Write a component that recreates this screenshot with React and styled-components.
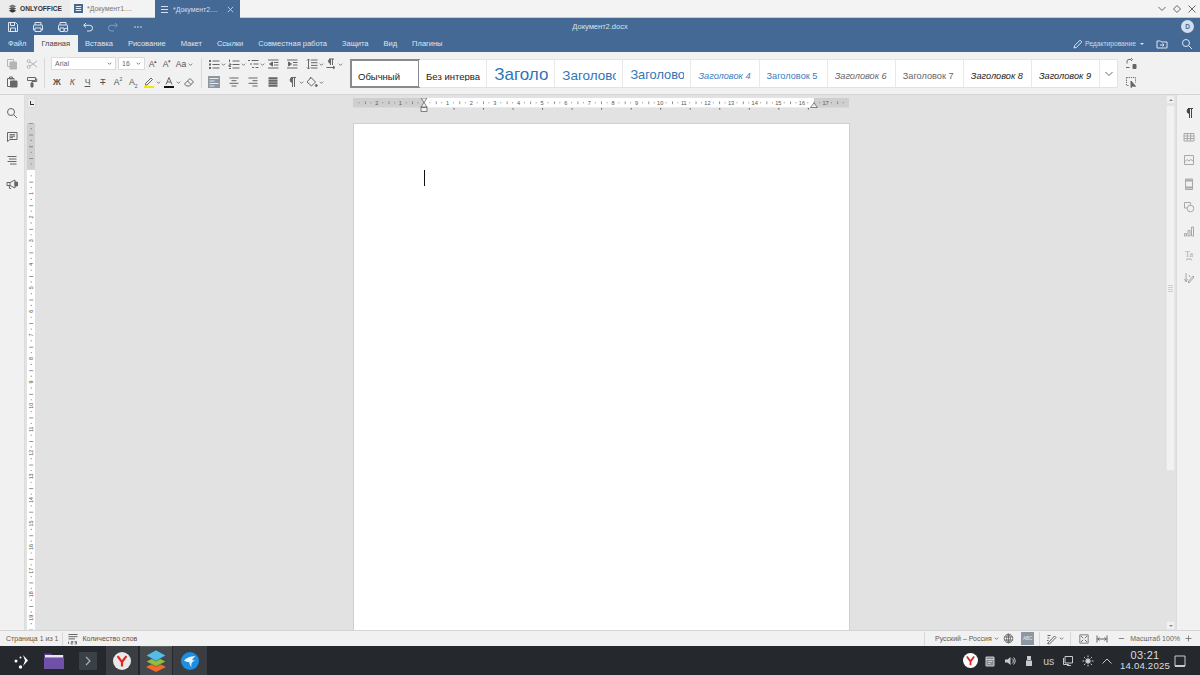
import React from 'react';
import styled, { createGlobalStyle } from 'styled-components';

const Global = createGlobalStyle`
  html, body { margin: 0; height: 100%; overflow: hidden; }
  #root { height: 100%; }
  * { box-sizing: border-box; }
  body { font-family: "Liberation Sans", Arial, sans-serif; }
`;

const Page = styled.div`display:flex;flex-direction:column;width:1200px;height:675px;overflow:hidden;background:#f1f1f1;`;

/* window tab strip */
const TabStrip = styled.div`display:flex;align-items:stretch;height:18px;flex:none;background:#f3f3f3;border-bottom:1px solid #c9c9c9;`;
const Brand = styled.div`display:flex;align-items:center;gap:3px;width:70px;padding-left:8px;background:#ececec;font-size:6.6px;font-weight:700;color:#333;`;
const WinTab = styled.div`
  display:flex;align-items:center;width:85px;padding-left:${p => p.$active ? 5 : 4}px;
  background:${p => p.$active ? '#446995' : '#f3f3f3'};
  color:${p => p.$active ? '#d5dfeb' : '#777'};font-size:6.9px;
  margin-bottom:${p => p.$active ? -1 : 0}px;
`;
const WinTabTitle = styled.span`margin-left:4px;flex:1;`;
const WinTabClose = styled.span`display:flex;margin-right:6px;`;
const WinControls = styled.div`margin-left:auto;display:flex;align-items:center;gap:5px;padding-right:3px;color:#666;`;

/* header */
const Header = styled.div`background:#446995;color:#dfe6ef;flex:none;`;
const TitleRow = styled.div`display:flex;align-items:center;height:17px;position:relative;`;
const QuickTool = styled.span`display:flex;justify-content:center;width:25px;opacity:${p => p.$dim ? .4 : 1};`;
const DocTitle = styled.div`position:absolute;left:0;right:0;top:0;height:17px;line-height:17px;text-align:center;font-size:7.5px;color:#dbe3ec;`;
const Avatar = styled.div`margin-left:auto;margin-right:6px;width:13px;height:13px;border-radius:50%;background:#d5dfeb;color:#446995;font-size:6.5px;font-weight:700;display:flex;align-items:center;justify-content:center;`;
const MenuRow = styled.div`display:flex;align-items:stretch;height:17px;`;
const MenuList = styled.div`display:flex;padding-left:.5px;`;
const MenuTab = styled.div`
  display:flex;align-items:center;padding:0 7.5px;font-size:7.5px;
  background:${p => p.$active ? '#f1f1f1' : 'transparent'};
  color:${p => p.$active ? '#444' : '#dfe6ef'};
`;
const HeaderRight = styled.div`margin-left:auto;display:flex;align-items:center;padding-right:7px;`;
const EditMode = styled.span`font-size:6.7px;color:#cfd9e5;margin-left:2px;margin-right:4px;`;
const Caret = styled.span`width:0;height:0;border-left:2px solid transparent;border-right:2px solid transparent;border-top:2.5px solid currentColor;`;
const CaretUp = styled(Caret)`border-top:none;border-bottom:2.5px solid currentColor;`;
const HeaderAction = styled.span`display:flex;margin-left:${p => p.$ml}px;`;

/* toolbar */
const Toolbar = styled.div`display:flex;height:43px;flex:none;padding-top:6px;background:#f1f1f1;border-bottom:1px solid #d5d5d5;color:#666;`;
const ToolCol = styled.div`display:flex;flex-direction:column;gap:6px;padding-left:${p => p.$pl || 0}px;width:${p => p.$w}px;flex:none;`;
const ToolRow = styled.div`display:flex;align-items:center;height:12px;`;
const Sep = styled.div`width:1px;height:30px;background:#d8d8d8;flex:none;`;
const Tool = styled.span`
  display:flex;align-items:center;width:${p => p.$w || 19.5}px;flex:none;height:12px;
  color:${p => p.$dim ? '#b5b5b5' : 'inherit'};
`;
const IconFace = styled.span`
  display:flex;align-items:center;justify-content:center;width:12px;height:12px;flex:none;
  background:${p => p.$on ? '#8b97a3' : 'transparent'};
  color:${p => p.$on ? '#e8e8e8' : 'inherit'};
`;
const Glyph = styled.span`font-size:8.6px;line-height:12px;font-weight:${p => p.$b ? 700 : 400};font-style:${p => p.$i ? 'italic' : 'normal'};text-decoration:${p => p.$d || 'none'};color:#555;`;
const Sup = styled.span`font-size:5px;vertical-align:${p => p.$sub ? 'sub' : 'super'};line-height:0;`;
const Combo = styled.div`
  display:flex;align-items:center;justify-content:space-between;width:${p => p.$w}px;height:13px;margin-right:${p => p.$mr || 0}px;
  padding:0 3px;background:#fff;border:1px solid #dcdcdc;font-size:7px;color:#666;flex:none;margin-top:-1px;
`;
const Gallery = styled.div`display:flex;width:768px;height:29px;margin-top:1px;margin-left:9px;background:#fff;border:1px solid #e2e2e2;border-radius:1px;flex:none;`;
const StyleItem = styled.div`
  width:68.1px;flex:none;height:100%;display:flex;align-items:flex-end;overflow:hidden;white-space:nowrap;
  background:#fff;border-right:${p => p.$sel ? 'none' : '1px solid #e9e9e9'};
  padding:0 6px ${p => p.$pb}px 7px;
  font-size:${p => p.$fs}px;line-height:1;color:${p => p.$c};font-style:${p => p.$it ? 'italic' : 'normal'};
  outline:${p => p.$sel ? '2px solid #8a8a8a' : 'none'};outline-offset:-1px;
`;
const StyleClip = styled.span`display:block;overflow:hidden;width:100%;`;
const GalleryMore = styled.div`flex:1;display:flex;align-items:center;justify-content:center;color:#666;`;
const EndTools = styled.div`display:flex;flex-direction:column;gap:6px;margin-left:7px;`;

/* workspace */
const Workspace = styled.div`flex:1;display:flex;min-height:0;background:#e2e2e2;`;
const SidePanel = styled.div`
  width:${p => p.$w}px;flex:none;display:flex;flex-direction:column;align-items:center;gap:11.6px;padding-top:12px;
  background:#f1f1f1;color:${p => p.$c || '#666'};
  ${p => p.$right ? 'border-left:1px solid #dcdcdc;' : 'border-right:1px solid #dcdcdc;'}
`;
const RightIcon = styled(IconFace)`color:${p => p.$strong ? '#444' : '#a8a8a8'};`;
const RulerColumn = styled.div`width:12px;flex:none;padding:3px 0 0 2px;display:flex;flex-direction:column;`;
const Corner = styled.div`width:9px;height:10px;background:#ececec;border:1px solid #dcdcdc;display:flex;align-items:center;justify-content:center;margin-bottom:15px;`;
const CornerMark = styled.span`width:4px;height:4px;border-left:1.5px solid #333;border-bottom:1.5px solid #333;`;
const DocArea = styled.div`flex:1;min-width:0;display:flex;flex-direction:column;align-items:center;padding:3px 0 0 1px;overflow:hidden;`;
const HRuler = styled.div`width:496px;height:14px;flex:none;margin-bottom:11px;display:flex;`;
const Sheet = styled.div`width:497px;flex:1;background:#fff;border:1px solid #cfcfcf;border-bottom:none;padding:46px 0 0 70px;`;
const Cursor = styled.div`width:1.5px;height:16px;background:#111;`;
const Scroll = styled.div`width:12px;flex:none;padding:0 1px 0 2px;display:flex;flex-direction:column;gap:1px;`;
const ScrollBtn = styled.div`height:9px;background:#f1f1f1;border:1px solid #e4e4e4;display:flex;align-items:center;justify-content:center;color:#888;`;
const ScrollTrack = styled.div`flex:1;display:flex;flex-direction:column;`;
const ScrollThumb = styled.div`height:366px;flex:none;background:#f2f2f2;border:1px solid #e6e6e6;display:flex;flex-direction:column;align-items:center;justify-content:center;gap:1px;`;
const Grip = styled.span`width:5px;height:1px;background:#cfcfcf;`;

/* status */
const Status = styled.div`height:16px;flex:none;display:flex;align-items:center;background:#f1f1f1;border-top:1px solid #d5d5d5;font-size:7px;color:#666;padding:0 7.5px 0 6px;`;
const StatusRight = styled.div`margin-left:auto;display:flex;align-items:center;`;
const StatusText = styled.span`color:${p => p.$c || '#666'};margin-left:${p => p.$ml || 0}px;white-space:nowrap;`;
const StatusSep = styled.span`width:1px;height:14px;background:#d8d8d8;margin-left:${p => p.$ml}px;flex:none;`;
const StatusIcon = styled.span`display:flex;align-items:center;justify-content:center;margin-left:${p => p.$ml}px;flex:none;color:#666;`;
const SpellBtn = styled.span`display:flex;align-items:center;justify-content:center;width:13px;height:13px;background:#8b97a3;color:#eee;margin-left:${p => p.$ml}px;font-size:4.5px;flex:none;`;

/* taskbar */
const Taskbar = styled.div`height:29px;flex:none;display:flex;align-items:stretch;background:#25292e;color:#d5d7d9;`;
const TaskSlot = styled.div`
  width:${p => p.$w}px;flex:none;display:flex;align-items:center;justify-content:center;margin-left:${p => p.$ml || 0}px;
  background:${p => p.$bg || 'transparent'};
  border-top:${p => p.$hl ? '1px solid #5a5f64' : 'none'};
`;
const Tray = styled.div`margin-left:auto;display:flex;align-items:center;padding-right:14px;`;
const TrayItem = styled.span`display:flex;align-items:center;justify-content:center;width:${p => p.$w || 19.5}px;color:#c8cacc;font-size:${p => p.$fs || 10}px;flex:none;`;
const Clock = styled.div`display:flex;flex-direction:column;align-items:center;width:54px;margin-left:1px;color:#dcdedf;margin-right:1px;`;
const ClockTime = styled.span`font-size:11px;line-height:11px;letter-spacing:.3px;`;
const ClockDate = styled.span`font-size:9.6px;line-height:10px;letter-spacing:.2px;`;

const Ic = ({ s = 12, vb = 12, sw = 1, children }) => (
  <svg width={s} height={s} viewBox={`0 0 ${vb} ${vb}`} fill="none" stroke="currentColor" strokeWidth={sw}>{children}</svg>
);
const ChevSvg = styled.svg`margin-left:1px;flex:none;`;
const Chev = ({ s = 5 }) => (
  <ChevSvg width={s} height={s} viewBox="0 0 6 6" fill="none" stroke="currentColor" strokeWidth="1"><path d="M1 2l2 2 2-2" /></ChevSvg>
);

const Layers = () => (
  <svg width="22" height="24" viewBox="0 0 22 24">
    <path d="M11 13l10 5-10 5-10-5z" fill="#f26a2e" />
    <path d="M11 7.5l10 5-10 5-10-5z" fill="#8dc13f" stroke="#25292e" strokeWidth=".4" />
    <path d="M11 1l10 5.5-10 5.5L1 6.5z" fill="#55bce6" stroke="#25292e" strokeWidth=".4" />
  </svg>
);
const YandexLogo = ({ s = 18, bg = '#e9e9e9' }) => (
  <svg width={s} height={s} viewBox="0 0 18 18">
    <circle cx="9" cy="9" r="9" fill={bg} />
    <path d="M4.6 4.2L9 10v4.6M13.4 4.2L9 10" stroke="#e52620" strokeWidth="2.2" fill="none" />
  </svg>
);

const paths = {
  save: <path d="M1.5 1.5h7l2 2v7h-9zM3.5 1.5v3h4v-3M3.5 10.5V7h5v3.5" />,
  print: <path d="M3 4V1.5h6V4M3 9H1.5V4.5a.5.5 0 0 1 .5-.5h8a.5.5 0 0 1 .5.5V9H9M3 7h6v3.5H3z" />,
  quick: <><path d="M3 4V1.5h6V4M3 9H1.5V4.5a.5.5 0 0 1 .5-.5h8a.5.5 0 0 1 .5.5V9M3 7h4v3.5H3z" /><circle cx="9" cy="9" r="1.8" /></>,
  undo: <path d="M4 2L1.7 4.3 4 6.6M1.7 4.3h6a2.8 2.8 0 0 1 0 5.7H5" />,
  redo: <path d="M8 2l2.3 2.3L8 6.6M10.3 4.3h-6a2.8 2.8 0 0 0 0 5.7H7" />,
  more: <g fill="currentColor" stroke="none"><circle cx="3" cy="6" r=".8" /><circle cx="6" cy="6" r=".8" /><circle cx="9" cy="6" r=".8" /></g>,
  copy: <><path d="M1.5 1.5h6v7h-6z" /><path d="M4 4h6.5v7H4z" fill="currentColor" /></>,
  cut: <><circle cx="2.7" cy="3.2" r="1.5" /><circle cx="2.7" cy="8.8" r="1.5" /><path d="M4 4l7 5M4 8l7-5" /></>,
  paste: <><path d="M1.5 2.5h6.5v2M1.5 2.5v8h2.5M3.5 1h3v2h-3z" /><path d="M4.5 5h6.5v6H4.5z" fill="currentColor" /></>,
  brush: <><path d="M1.5 1.5h8v3h-8zM9.5 3h1.2v2.5H6v1.5" /><path d="M5 7h2v4H5z" fill="currentColor" /></>,
  bullets: <><g fill="currentColor" stroke="none"><rect x="1" y="2" width="2" height="2" /><rect x="1" y="5.5" width="2" height="2" /><rect x="1" y="9" width="2" height="2" /></g><path d="M4.5 3h7M4.5 6.5h7M4.5 10h7" /></>,
  numbers: <path d="M1.5 1.5v2.5M1 6h2v1H1v1.5h2M1 10.5h2M4.5 3h7M4.5 6.5h7M4.5 10h7" />,
  multi: <path d="M1 2.5h2M3 6h2M5 9.5h2M4.5 2.5h7M6.5 6h5M8.5 9.5h3" />,
  outdent: <><path d="M1 2h10.5M7 4.5h4.5M7 7h4.5M1 10h10.5" /><path d="M5.5 4v4L2.5 6z" fill="currentColor" /></>,
  indent: <><path d="M1 2h10.5M7 4.5h4.5M7 7h4.5M1 10h10.5" /><path d="M2.5 4v4l3-2z" fill="currentColor" /></>,
  spacing: <path d="M5 2h6.5M5 4.7h6.5M5 7.4h6.5M5 10h6.5M2.5 1v10M1 2.5L2.5 1 4 2.5M1 9.5L2.5 11 4 9.5" />,
  dir: <><path d="M4 1h5M7.5 1v6M5.5 1v6" /><path d="M5.5 1.2a2 2 0 0 0 0 4z" fill="currentColor" /><path d="M1.5 9.5h8M8 8l2 1.5L8 11" /></>,
  left: <path d="M1.5 2.5h9M1.5 5h5M1.5 7.5h9M1.5 10h5" />,
  center: <path d="M1.5 2h9M3.5 4.7h5M1.5 7.3h9M3.5 10h5" />,
  right: <path d="M1.5 2h9M5.5 4.7h5M1.5 7.3h9M5.5 10h5" />,
  justify: <path d="M1.5 2.2h9M1.5 4.7h9M1.5 7.3h9M1.5 9.8h9" strokeWidth="2" />,
  para: <><path d="M5 1.5h5M8.5 1.5v9.5M6.5 1.5V11" /><path d="M6.5 1.6a2.4 2.4 0 0 0 0 4.8z" fill="currentColor" /></>,
  fill: <><path d="M5 1.5l4.5 4.5-4 4L1 6z" /><path d="M5 1L3.5 3" /><circle cx="10.3" cy="9.5" r="1" fill="currentColor" /></>,
  eraser: <><path d="M1.5 8l5.5-5.5 3.5 3.5-4 4H3.5z" /><path d="M4.5 5L8 8.5" /></>,
  replace: <><path d="M2 5.5V3.5a2 2 0 0 1 2-2h2M6 0l1.5 1.5L6 3M1 9.5h3.5" /><path d="M8 6.5h3v4H8z" fill="currentColor" /></>,
  select: <><path d="M1.5 1.5h9v5M1.5 1.5v8h3" strokeDasharray="1.2 1" /><path d="M6 5v6.5l1.7-1.5 2.8.3z" fill="currentColor" /></>,
  search: <><circle cx="5" cy="5" r="3.5" /><path d="M7.6 7.6L11 11" /></>,
  comment: <path d="M1.5 1.5h9.5v7H4L1.5 10.5zM3.5 3.7h5.5M3.5 5.2h5.5M3.5 6.7h3.5" />,
  nav: <path d="M1.5 2.5h9M3 5h7.5M1.5 7.5h9M4 10h6.5" />,
  horn: <><path d="M1 4.5h3v3H1zM4 4.5L9 2v8L4 7.5M3 7.5l.7 3h1.3" /><path d="M9 4h1.5a2 2 0 0 1 0 4H9z" fill="currentColor" /></>,
  table: <path d="M1 2.5h10v7.5H1zM1 5h10M1 7.5h10M4.3 2.5V10M7.7 2.5V10" />,
  image: <path d="M1.5 1.5h9v9h-9zM1.5 8l2.5-2.5 2 1.5 2-1.5 2.5 2" />,
  header: <><path d="M2.5 1h7v10.5h-7z" /><path d="M2.5 2.5h7M2.5 9.5h7" strokeWidth="2" /></>,
  shape: <><path d="M1.5 1.5h6v5.5h-6z" /><circle cx="7.5" cy="7.5" r="3.3" fill="#f1f1f1" /></>,
  chart: <path d="M1.5 8.5h2v2.5h-2zM5 5.5h2V11H5zM8.5 2h2v9h-2z" />,
  art: <><text x="6" y="7.5" fontSize="8" textAnchor="middle" fill="currentColor" stroke="none" fontFamily="Liberation Serif">Ta</text><path d="M3 11c1.5-1.5 4.5-1.5 6 0" /></>,
  sign: <path d="M3 1v8M1.5 7l1.5 3 1.5-3M5 10l5-6 1 1-5 6zM6 3l1 2" />,
  words: <><path d="M1.5 1.5h9M1.5 3.7h9M1.5 5.9h6.5" /><path d="M1.5 8.5v2.5M4 8.5h2v1.2H4V11h2M7.5 8.5h2v2.5h-2M8 9.7h1.5" strokeWidth=".8" /></>,
  globe: <><circle cx="6" cy="6" r="4.7" /><ellipse cx="6" cy="6" rx="2.1" ry="4.7" /><path d="M1.5 4.3h9M1.5 7.7h9M6 1.3v9.4" /></>,
  track: <path d="M1.5 2.5h3M1.5 5h2M1.5 10.5L8.5 3 10 4.5 3.5 11zM1 7.5h1.5" />,
  fit: <><path d="M1 1h10v10H1z" /><path d="M2.5 2.5l2.5 2.5M9.5 2.5L7 5M2.5 9.5L5 7M9.5 9.5L7 7" strokeWidth="1.2" /></>,
  width: <path d="M1 2.5v7M11 2.5v7M1.5 6h9M3.5 4.5L1.8 6l1.7 1.5M8.5 4.5L10.2 6 8.5 7.5" />,
  minus: <path d="M2.5 6h7" />,
  plus: <path d="M2 6h8M6 2v8" />,
};

function HorizontalRuler() {
  const cm = 23.62, zero = 71, items = [];
  for (let i = -3; i <= 18; i++) {
    const x = zero + i * cm;
    if (i !== 0 && i !== -3 && i !== 18)
      items.push(<text key={`n${i}`} x={x} y="6.8" fontSize="5.6" textAnchor="middle" fill="#555" fontFamily="Liberation Sans">{Math.abs(i)}</text>);
    [.25, .75].forEach((f, k) => items.push(<circle key={`d${i}${k}`} cx={x + f * cm} cy="4.8" r=".55" fill="#777" />));
    items.push(<rect key={`h${i}`} x={x + .5 * cm} y="3.4" width=".8" height="2.8" fill="#777" />);
  }
  const tabs = [];
  for (let i = 1; i <= 13; i++) tabs.push(<rect key={i} x={71 + i * 29.53} y="10" width=".9" height="1.6" fill="#555" />);
  return (
    <svg width="496" height="14" viewBox="0 0 496 14">
      <rect x="0" y="0" width="496" height="9.5" fill="#cfcfcf" />
      <rect x="71" y="0" width="390" height="9.5" fill="#fff" />
      {items}{tabs}
      <path d="M68 0h6l-3 4.5 3 4.5h-6l3-4.5z" fill="#f1f1f1" stroke="#555" strokeWidth=".7" />
      <rect x="68" y="9.5" width="6" height="4" fill="#f1f1f1" stroke="#555" strokeWidth=".7" />
      <path d="M461 5l3.5 4.5h-7z" fill="#f1f1f1" stroke="#555" strokeWidth=".7" />
    </svg>
  );
}

function VerticalRuler() {
  const cm = 23.62, zero = 47, items = [];
  for (let i = -2; i <= 20; i++) {
    const y = zero + i * cm;
    if (i > 0) items.push(<text key={`n${i}`} x="4.3" y={y + 1.8} fontSize="5.4" textAnchor="middle" fill="#555" fontFamily="Liberation Sans" transform={`rotate(-90 4.3 ${y})`}>{i}</text>);
    else if (i < 0) items.push(<rect key={`l${i}`} x="2" y={y} width="4" height=".9" fill="#777" />);
    [.25, .75].forEach((f, k) => items.push(<circle key={`d${i}${k}`} cx="4.2" cy={y + f * cm} r=".6" fill="#777" />));
    items.push(<rect key={`h${i}`} x="2.2" y={y + .5 * cm} width="4" height=".9" fill="#888" />);
  }
  return (
    <svg width="8" height="508" viewBox="0 0 8 508">
      <rect width="8" height="508" fill="#fff" />
      <rect width="8" height="47" fill="#cfcfcf" />
      {items}
    </svg>
  );
}

const styleItems = [
  { t: 'Обычный', fs: 9.5, c: '#222', pb: 6, sel: true },
  { t: 'Без интерва', fs: 9.5, c: '#222', pb: 6 },
  { t: 'Заголовок 1', fs: 17, c: '#2f74b8', pb: 4 },
  { t: 'Заголовок 2', fs: 13.5, c: '#2f74b8', pb: 5 },
  { t: 'Заголовок 3', fs: 12.8, c: '#2f74b8', pb: 5 },
  { t: 'Заголовок 4', fs: 9.2, c: '#3a7cbd', pb: 6, it: true },
  { t: 'Заголовок 5', fs: 9.2, c: '#3a7cbd', pb: 6 },
  { t: 'Заголовок 6', fs: 9.2, c: '#666', pb: 6, it: true },
  { t: 'Заголовок 7', fs: 9.2, c: '#666', pb: 6 },
  { t: 'Заголовок 8', fs: 9.2, c: '#222', pb: 6, it: true },
  { t: 'Заголовок 9', fs: 9.2, c: '#222', pb: 6, it: true },
];

const menus = ['Файл', 'Главная', 'Вставка', 'Рисование', 'Макет', 'Ссылки', 'Совместная работа', 'Защита', 'Вид', 'Плагины'];
const leftIcons = ['search', 'comment', 'nav', 'horn'];
const rightIcons = ['para', 'table', 'image', 'header', 'shape', 'chart', 'art', 'sign'];

const P = ({ i, s }) => <Ic s={s}>{paths[i]}</Ic>;
const T = ({ i, chev, on, w, dim }) => (
  <Tool $w={w} $dim={dim}>
    <IconFace $on={on}><P i={i} /></IconFace>
    {chev && <Chev />}
  </Tool>
);
const G = ({ w = 15.25, b, it, d, chev, children }) => (
  <Tool $w={w}>
    <IconFace><Glyph $b={b} $i={it} $d={d}>{children}</Glyph></IconFace>
    {chev && <Chev />}
  </Tool>
);

export default function App() {
  return (
    <Page>
      <Global />
      <TabStrip>
        <Brand>
          <svg width="9" height="9" viewBox="0 0 22 24"><path d="M11 13l10 5-10 5-10-5z" fill="#333" /><path d="M11 7l10 5-10 5-10-5z" fill="#555" /><path d="M11 1l10 5-10 5-10-5z" fill="#777" /></svg>
          ONLYOFFICE
        </Brand>
        <WinTab>
          <svg width="9" height="9" viewBox="0 0 9 9"><rect width="9" height="9" fill="#446995" /><path d="M1.8 2.5h5.4M1.8 4.5h5.4M1.8 6.5h5.4" stroke="#fff" strokeWidth=".9" /></svg>
          <WinTabTitle>*Документ1....</WinTabTitle>
        </WinTab>
        <WinTab $active>
          <Ic s={9} vb={9} sw={1.1}><path d="M1 1.5h7M1 4.5h7M1 7.5h7" /></Ic>
          <WinTabTitle>*Документ2....</WinTabTitle>
          <WinTabClose><Ic s={7} vb={9}><path d="M1 1l7 7M8 1L1 8" /></Ic></WinTabClose>
        </WinTab>
        <WinControls>
          <Ic s={10} vb={10}><path d="M1.5 3l3.5 3.5L8.5 3" /></Ic>
          <Ic s={10} vb={10}><path d="M5 1.5L8.5 5 5 8.5 1.5 5z" /></Ic>
          <Ic s={10} vb={10}><path d="M1.5 1.5l7 7M8.5 1.5l-7 7" /></Ic>
        </WinControls>
      </TabStrip>

      <Header>
        <TitleRow>
          <QuickTool><P i="save" /></QuickTool>
          <QuickTool><P i="print" /></QuickTool>
          <QuickTool><P i="quick" /></QuickTool>
          <QuickTool><P i="undo" /></QuickTool>
          <QuickTool $dim><P i="redo" /></QuickTool>
          <QuickTool><P i="more" /></QuickTool>
          <DocTitle>Документ2.docx</DocTitle>
          <Avatar>D</Avatar>
        </TitleRow>
        <MenuRow>
          <MenuList>
            {menus.map(m => <MenuTab key={m} $active={m === 'Главная'}>{m}</MenuTab>)}
          </MenuList>
          <HeaderRight>
            <Ic s={10} vb={10}><path d="M1 9l.6-2.4L7 1.2 8.8 3 3.4 8.4z" /></Ic>
            <EditMode>Редактирование</EditMode>
            <Caret />
            <HeaderAction $ml={12}>
              <Ic><path d="M1 3h3.5l1 1H11v6H1zM4 7h4M6.5 5.5L8 7 6.5 8.5" /></Ic>
            </HeaderAction>
            <HeaderAction $ml={13}><P i="search" /></HeaderAction>
          </HeaderRight>
        </MenuRow>
      </Header>

      <Toolbar>
        <ToolCol $w={44} $pl={6}>
          <ToolRow><T i="copy" dim /><T i="cut" dim /></ToolRow>
          <ToolRow><T i="paste" /><T i="brush" /></ToolRow>
        </ToolCol>
        <Sep />
        <ToolCol $w={156} $pl={6}>
          <ToolRow>
            <Combo $w={65} $mr={2}>Arial<Chev /></Combo>
            <Combo $w={27} $mr={2}>16<Chev /></Combo>
            <G w={14}>A<Sup>▴</Sup></G>
            <G w={14}>A<Sup>▾</Sup></G>
            <G w={18} chev>Aa</G>
          </ToolRow>
          <ToolRow>
            <G b>Ж</G><G it>К</G><G d="underline">Ч</G><G d="line-through">Т</G>
            <G>A<Sup>2</Sup></G><G>A<Sup $sub>2</Sup></G>
            <Tool $w={20}>
              <IconFace>
                <svg width="12" height="12" viewBox="0 0 12 12" fill="none" stroke="currentColor"><path d="M2.5 7.5L8 2l1.5 1.5L4 9H2.5z" /><rect x="1" y="10" width="10" height="2" fill="#f5e600" stroke="none" /></svg>
              </IconFace>
              <Chev />
            </Tool>
            <Tool $w={20}>
              <IconFace>
                <svg width="12" height="12" viewBox="0 0 12 12" fill="none" stroke="currentColor"><path d="M3 8.5L6 1.5l3 7M4 6h4" /><rect x="1" y="10" width="10" height="2" fill="#111" stroke="none" /></svg>
              </IconFace>
              <Chev />
            </Tool>
            <T i="eraser" />
          </ToolRow>
        </ToolCol>
        <Sep />
        <ToolCol $w={139} $pl={6}>
          <ToolRow>
            <T i="bullets" chev /><T i="numbers" chev /><T i="multi" chev />
            <T i="outdent" /><T i="indent" /><T i="spacing" chev /><T i="dir" chev />
          </ToolRow>
          <ToolRow>
            <T i="left" on /><T i="center" /><T i="right" /><T i="justify" /><T i="para" chev /><T i="fill" chev />
          </ToolRow>
        </ToolCol>
        <Gallery>
          {styleItems.map(s => (
            <StyleItem key={s.t} $fs={s.fs} $c={s.c} $it={s.it} $pb={s.pb} $sel={s.sel}>
              <StyleClip>{s.t}</StyleClip>
            </StyleItem>
          ))}
          <GalleryMore><Ic s={10} vb={10}><path d="M1.5 3l3.5 3.5L8.5 3" /></Ic></GalleryMore>
        </Gallery>
        <EndTools>
          <IconFace><P i="replace" /></IconFace>
          <IconFace><P i="select" /></IconFace>
        </EndTools>
      </Toolbar>

      <Workspace>
        <SidePanel $w={25}>
          {leftIcons.map(k => <IconFace key={k}><P i={k} /></IconFace>)}
        </SidePanel>
        <RulerColumn>
          <Corner><CornerMark /></Corner>
          <VerticalRuler />
        </RulerColumn>
        <DocArea>
          <HRuler><HorizontalRuler /></HRuler>
          <Sheet><Cursor /></Sheet>
        </DocArea>
        <Scroll>
          <ScrollBtn><CaretUp /></ScrollBtn>
          <ScrollTrack>
            <ScrollThumb><Grip /><Grip /><Grip /><Grip /></ScrollThumb>
          </ScrollTrack>
          <ScrollBtn><Caret /></ScrollBtn>
        </Scroll>
        <SidePanel $w={24} $right>
          {rightIcons.map(k => <RightIcon key={k} $strong={k === 'para'}><P i={k} /></RightIcon>)}
        </SidePanel>
      </Workspace>

      <Status>
        <StatusText $c="#6b5a45">Страница 1 из 1</StatusText>
        <StatusSep $ml={4} />
        <StatusIcon $ml={4}><P i="words" /></StatusIcon>
        <StatusText $ml={3} $c="#555">Количество слов</StatusText>
        <StatusRight>
          <StatusSep $ml={0} />
          <StatusText $ml={10} $c="#6b5a45">Русский – Россия</StatusText>
          <StatusIcon $ml={1}><Chev /></StatusIcon>
          <StatusIcon $ml={4}><P i="globe" s={11} /></StatusIcon>
          <SpellBtn $ml={7.5}>ABC</SpellBtn>
          <StatusSep $ml={5} />
          <StatusIcon $ml={6}><P i="track" /></StatusIcon>
          <StatusIcon $ml={0}><Chev /></StatusIcon>
          <StatusSep $ml={6} />
          <StatusIcon $ml={8}><P i="fit" s={10} /></StatusIcon>
          <StatusIcon $ml={7}><P i="width" /></StatusIcon>
          <StatusIcon $ml={8.5}><P i="minus" s={9} /></StatusIcon>
          <StatusText $ml={4.5}>Масштаб 100%</StatusText>
          <StatusIcon $ml={3.5}><P i="plus" s={9} /></StatusIcon>
        </StatusRight>
      </Status>

      <Taskbar>
        <TaskSlot $w={42}>
          <svg width="20" height="20" viewBox="0 0 20 20" fill="#fff">
            <circle cx="5" cy="10" r="1.5" /><circle cx="9.5" cy="6.5" r="1" /><circle cx="9.5" cy="16" r="1.7" />
            <path d="M12 4l5 5.5-5 5.5 2-5.5z" />
          </svg>
        </TaskSlot>
        <TaskSlot $w={24}>
          <svg width="20" height="17" viewBox="0 0 20 17">
            <path d="M0 1.5h7l1 1.5h12v14H0z" fill="#5a3f96" />
            <path d="M1 3h18v2.5H1z" fill="#e9e4f2" />
            <path d="M0 6h20v11H0z" fill="#6f52a8" />
          </svg>
        </TaskSlot>
        <TaskSlot $w={36} $ml={4}>
          <svg width="18" height="18" viewBox="0 0 18 18" fill="none">
            <rect width="18" height="18" rx="1" fill="#3a4146" />
            <path d="M7 5l4 4-4 4" stroke="#aeb4b8" strokeWidth="1.1" />
          </svg>
        </TaskSlot>
        <TaskSlot $w={32} $bg="#3a3e43"><YandexLogo /></TaskSlot>
        <TaskSlot $w={32} $ml={2} $bg="#45494e" $hl><Layers /></TaskSlot>
        <TaskSlot $w={34} $ml={1} $bg="#3a3e43">
          <svg width="18" height="18" viewBox="0 0 18 18">
            <circle cx="9" cy="9" r="9" fill="#1a8fe3" />
            <path d="M3 8.5C6 5.5 9 4.5 14.5 4 12.5 5.5 11.5 7 11 8.5c1-.3 2.2-.3 3 0-1.5.7-3 1.5-3.5 3-.3 1-.3 2.3.2 3.5C9 13.5 8.5 12 8.5 10.5 6.5 10 4.5 9.5 3 8.5z" fill="#e9f3fb" />
          </svg>
        </TaskSlot>
        <Tray>
          <TrayItem><YandexLogo s={15} bg="#fff" /></TrayItem>
          <TrayItem><Ic><path d="M2 2h8v9H2zM2 4.5h8M4 6.5h4M4 8.5h2.5" fill="#8a8d90" /></Ic></TrayItem>
          <TrayItem>
            <svg width="12" height="12" viewBox="0 0 12 12" fill="currentColor"><path d="M1 4.5h2.5L6.5 2v8L3.5 7.5H1z" /><path d="M8 3.5a3 3 0 0 1 0 5M9.5 2.5a4.5 4.5 0 0 1 0 7" fill="none" stroke="currentColor" /></svg>
          </TrayItem>
          <TrayItem><svg width="12" height="12" viewBox="0 0 12 12" fill="currentColor"><path d="M4 1h4v4H4zM3 5.5h6V11H3z" /></svg></TrayItem>
          <TrayItem $fs={10.5}>us</TrayItem>
          <TrayItem><Ic><path d="M3 1.5h7.5V8H3z" /><path d="M1.5 3v6.5h5v1H5h4" /></Ic></TrayItem>
          <TrayItem><Ic><circle cx="6" cy="6" r="2.2" fill="currentColor" /><path d="M6 .5v1.7M6 9.8v1.7M.5 6h1.7M9.8 6h1.7M2 2l1.3 1.3M8.7 8.7L10 10M2 10l1.3-1.3M8.7 3.3L10 2" /></Ic></TrayItem>
          <TrayItem><Ic><path d="M1.5 8.5L6 4l4.5 4.5" /></Ic></TrayItem>
          <Clock><ClockTime>03:21</ClockTime><ClockDate>14.04.2025</ClockDate></Clock>
          <TrayItem $w={13}><Ic><path d="M1 1h10v10H1z" /><path d="M1 11h10" strokeWidth="2" /></Ic></TrayItem>
        </Tray>
      </Taskbar>
    </Page>
  );
}
